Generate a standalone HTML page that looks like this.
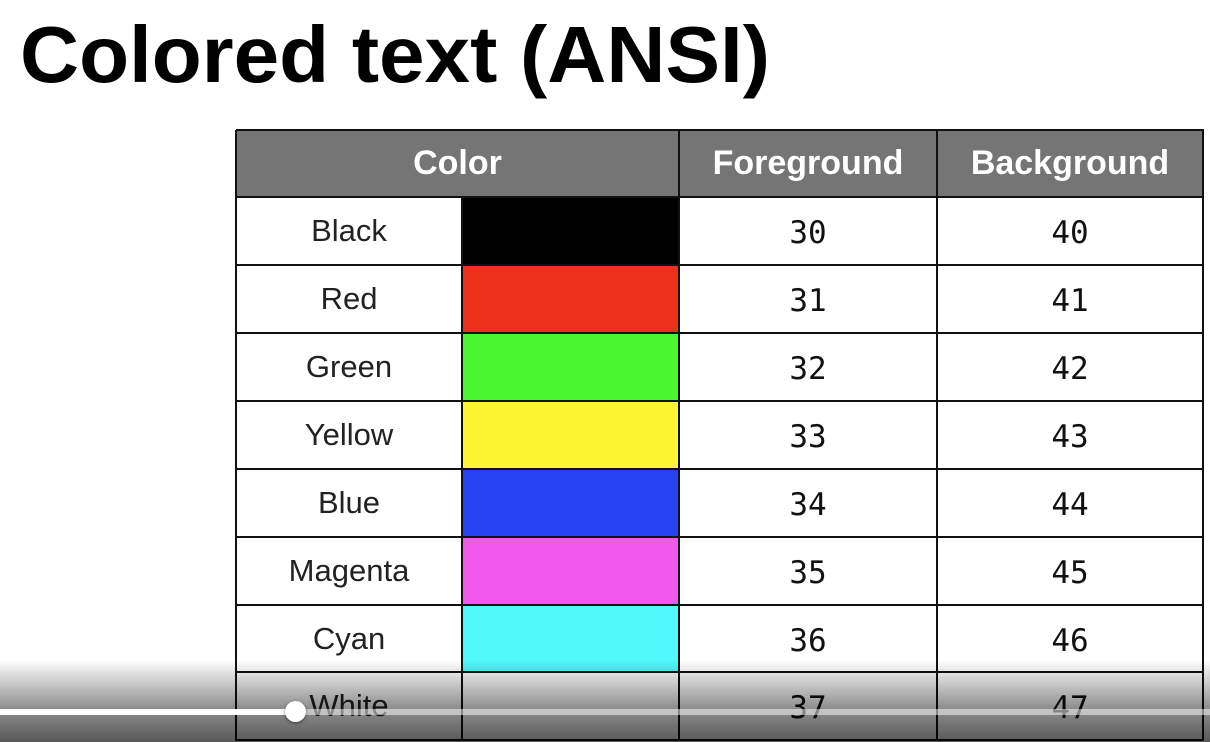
<!DOCTYPE html>
<html><head><style>
body{margin:0;width:1210px;height:742px;overflow:hidden;background:#fff;position:relative;font-family:"Liberation Sans",sans-serif}
.c{position:absolute;box-sizing:border-box;display:flex;align-items:center;justify-content:center}
.h{background:#757575;color:#fff;font-weight:bold;font-size:34px}
.n{font-size:31px;color:#222}
.m{font-family:"DejaVu Sans Mono",monospace;font-size:31px;color:#111;padding-top:4px}
</style></head><body>
<svg style="position:absolute;left:0;top:0" width="1210" height="110"><text x="20" y="82" font-family="Liberation Sans" font-weight="bold" font-size="80" textLength="750" lengthAdjust="spacingAndGlyphs">Colored text (ANSI)</text></svg>
<div id="t"></div>
<script>
var ys=[130,197,265,333,401,469,537,605,672,740];
var xs=[236,462,679,937,1203];
var names=["Black","Red","Green","Yellow","Blue","Magenta","Cyan","White"];
var cols=["#000","#ec301a","#4af72f","#fdf432","#2544f0","#f257eb","#50f8fc","#fff"];
var h='';
function cell(x1,y1,x2,y2,cls,txt,bg){h+='<div class="c '+cls+'" style="left:'+x1+'px;top:'+y1+'px;width:'+(x2-x1)+'px;height:'+(y2-y1)+'px;'+(bg?'background:'+bg:'')+'">'+txt+'</div>';}
cell(236,130,679,197,'h','Color');cell(679,130,937,197,'h','Foreground');cell(937,130,1203,197,'h','Background');
for(var i=0;i<8;i++){var a=ys[i+1],b=ys[i+2];cell(236,a,462,b,'n',names[i]);cell(462,a,679,b,'','',cols[i]);cell(679,a,937,b,'m',30+i);cell(937,a,1203,b,'m',40+i);}
for(var j=0;j<ys.length;j++)h+='<div style="position:absolute;left:236px;top:'+(ys[j]-1)+'px;width:968px;height:2px;background:#111"></div>';
xs.forEach(function(x,k){var top=(k==1)?197:130;h+='<div style="position:absolute;left:'+(x-1)+'px;top:'+top+'px;width:2px;height:'+(741-top)+'px;background:#111"></div>';});
document.getElementById('t').innerHTML=h;
</script>
<div style="position:absolute;left:0;top:660px;width:1210px;height:82px;background:linear-gradient(rgba(0,0,0,0),rgba(0,0,0,0.15) 20%,rgba(0,0,0,0.45) 60%,rgba(0,0,0,0.65))"></div>
<div style="position:absolute;left:0;top:709px;width:1210px;height:6px;background:rgba(255,255,255,0.5)"></div>
<div style="position:absolute;left:0;top:709px;width:295px;height:6px;background:#fff"></div>
<div style="position:absolute;left:285px;top:701px;width:21px;height:21px;border-radius:50%;background:#fff;box-shadow:0 1px 3px rgba(0,0,0,.5)"></div>
</body></html>
